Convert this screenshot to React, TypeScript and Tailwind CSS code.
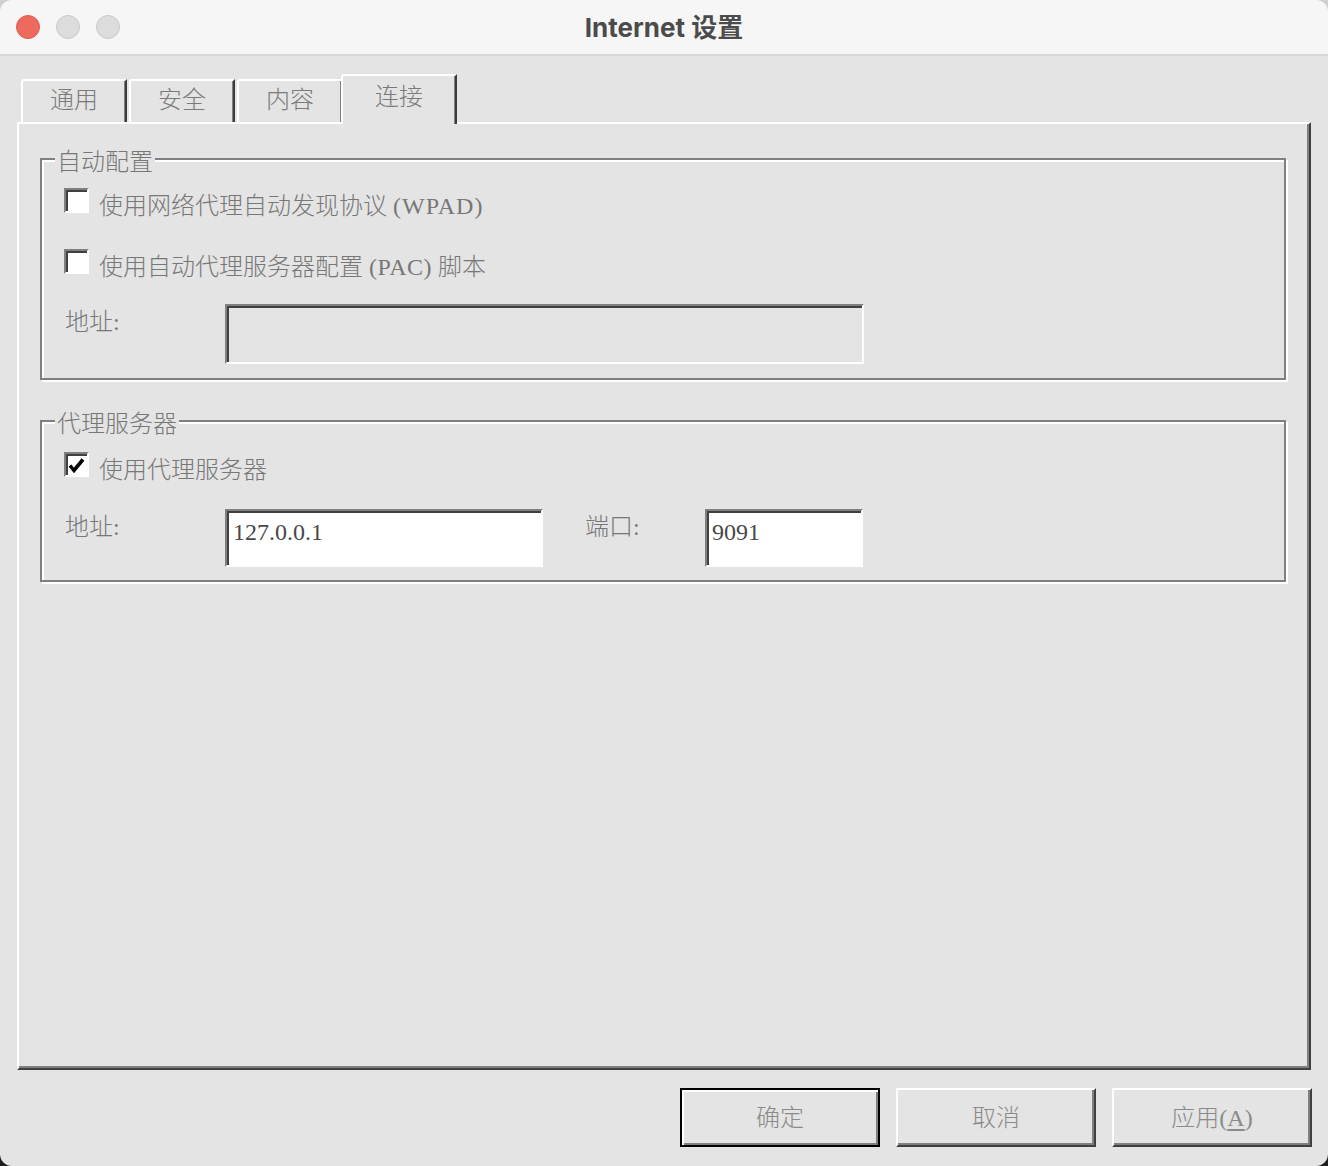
import type { ReactNode } from "react";

const sunken =
  "border-2 border-t-[#808080] border-l-[#808080] border-r-white border-b-white shadow-[inset_2px_2px_0_#404040]";

function Checkbox({ checked }: { checked?: boolean }) {
  return (
    <div className={`w-[25px] h-[25px] shrink-0 bg-white flex items-center justify-center ${sunken}`}>
      {checked && (
        <svg width="17" height="17" viewBox="0 0 17 17" className="mt-[1px]">
          <polyline points="2,8.5 6,13.5 15,2.5" fill="none" stroke="#000" strokeWidth="3.6" strokeLinejoin="miter" />
        </svg>
      )}
    </div>
  );
}

function Group({ title, children, className }: { title: string; children: ReactNode; className: string }) {
  return (
    <div
      className={`relative border-2 border-[#808080] shadow-[inset_2px_2px_0_#fff,2px_2px_0_#fff] pl-[22px] ${className}`}
    >
      <div className="absolute -top-[12px] left-[13px] px-[2px] bg-[#e4e4e4] leading-[28px] text-[24px] text-[#777]">
        {title}
      </div>
      {children}
    </div>
  );
}

function Tab({ label, selected, className = "" }: { label: string; selected?: boolean; className?: string }) {
  return (
    <div
      className={`flex justify-center border-t-2 border-l-2 border-r-2 border-t-white border-l-white border-r-[#3c3c3c] shadow-[inset_-1px_0_0_#808080] rounded-tl-[3px] bg-[#e4e4e4] text-[24px] leading-[28px] text-[#7a7a7a] ${
        selected ? "relative z-10 -ml-[2px] w-[116px] h-[50px] -mb-[2px] pt-[7px]" : "w-[106px] h-[43px] pt-[5px]"
      } ${className}`}
    >
      {label}
    </div>
  );
}

function Button({ children, primary }: { children: ReactNode; primary?: boolean }) {
  return (
    <div
      className={`w-[200px] h-[59px] flex items-center justify-center text-[24px] leading-[28px] text-[#8a8a8a] ${
        primary
          ? "border-2 border-black shadow-[inset_2px_2px_0_#fff,inset_-2px_-2px_0_#808080]"
          : "border-2 border-t-white border-l-white border-r-[#404040] border-b-[#404040] shadow-[inset_-2px_-2px_0_#808080]"
      }`}
    >
      {children}
    </div>
  );
}

export default function App() {
  return (
    <div className="w-[1328px] h-[1166px] bg-gradient-to-b from-[#cfcfcf] via-[#8a8a8a] to-[#1e1e1e]">
      <div className="w-full h-full rounded-[12px] overflow-hidden bg-[#e4e4e4] flex flex-col font-['Liberation_Serif','Noto_Sans_CJK_SC',serif] font-light">
        {/* title bar */}
        <div className="h-[56px] shrink-0 bg-[#f6f6f6] border-b-2 border-[#d8d8d8] grid grid-cols-[1fr_auto_1fr] items-center">
          <div className="flex items-center gap-[16px] pl-[16px]">
            <div className="w-[24px] h-[24px] rounded-full bg-[#ee6a5f] border border-[#de5c50]" />
            <div className="w-[24px] h-[24px] rounded-full bg-[#dcdcdc] border border-[#c8c8c8]" />
            <div className="w-[24px] h-[24px] rounded-full bg-[#dcdcdc] border border-[#c8c8c8]" />
          </div>
          <div className="font-['Inter','Noto_Sans_CJK_SC',sans-serif] font-bold text-[26px] text-[#4b4b4b]">
            Internet 设置
          </div>
          <div />
        </div>

        {/* tabs */}
        <div className="mt-[18px] h-[48px] flex items-end pl-[21px]">
          <Tab label="通用" className="mr-[2px]" />
          <Tab label="安全" className="mr-[2px]" />
          <Tab label="内容" />
          <Tab label="连接" selected />
        </div>

        {/* panel */}
        <div className="mx-[17px] h-[948px] shrink-0 border-2 border-t-white border-l-white border-r-[#404040] border-b-[#404040] shadow-[inset_-2px_-2px_0_#808080] pt-[34px] pl-[21px] pr-[23px]">
          <Group title="自动配置" className="pt-[28px] pb-[14px]">
            <div className="flex items-start gap-[10px]">
              <Checkbox />
              <span className="mt-[4px] text-[24px] leading-[28px] text-[#777]">
                使用网络代理自动发现协议 <span className="tracking-[1px]">(WPAD)</span>
              </span>
            </div>
            <div className="mt-[29px] flex items-start gap-[10px]">
              <Checkbox />
              <span className="mt-[4px] text-[24px] leading-[28px] text-[#777]">
                使用自动代理服务器配置 <span className="tracking-[0.5px]">(PAC)</span> 脚本
              </span>
            </div>
            <div className="mt-[23px] flex items-start">
              <span className="w-[161px] pl-[1px] mt-[4px] text-[24px] leading-[28px] text-[#777]">地址:</span>
              <div className={`w-[639px] h-[60px] bg-[#e4e4e4] ${sunken}`} />
            </div>
          </Group>

          <Group title="代理服务器" className="mt-[40px] pt-[30px] pb-[13px]">
            <div className="flex items-start gap-[10px]">
              <Checkbox checked />
              <span className="mt-[4px] text-[24px] leading-[28px] text-[#777]">使用代理服务器</span>
            </div>
            <div className="mt-[25px] flex items-start">
              <span className="w-[161px] pl-[1px] mt-[4px] text-[24px] leading-[28px] text-[#777]">地址:</span>
              <div className={`w-[318px] h-[58px] bg-white pl-[6px] pt-[7px] text-[24px] leading-[28px] text-[#484848] ${sunken}`}>
                127.0.0.1
              </div>
              <span className="ml-[42px] w-[120px] mt-[4px] text-[24px] leading-[28px] text-[#777]">端口:</span>
              <div className={`w-[158px] h-[58px] bg-white pl-[5px] pt-[7px] text-[24px] leading-[28px] text-[#484848] ${sunken}`}>
                9091
              </div>
            </div>
          </Group>
        </div>

        {/* buttons */}
        <div className="mt-[18px] flex justify-end gap-[16px] pr-[16px]">
          <Button primary>确定</Button>
          <Button>取消</Button>
          <Button>
            应用(<span className="underline underline-offset-[3px]">A</span>)
          </Button>
        </div>
      </div>
    </div>
  );
}
